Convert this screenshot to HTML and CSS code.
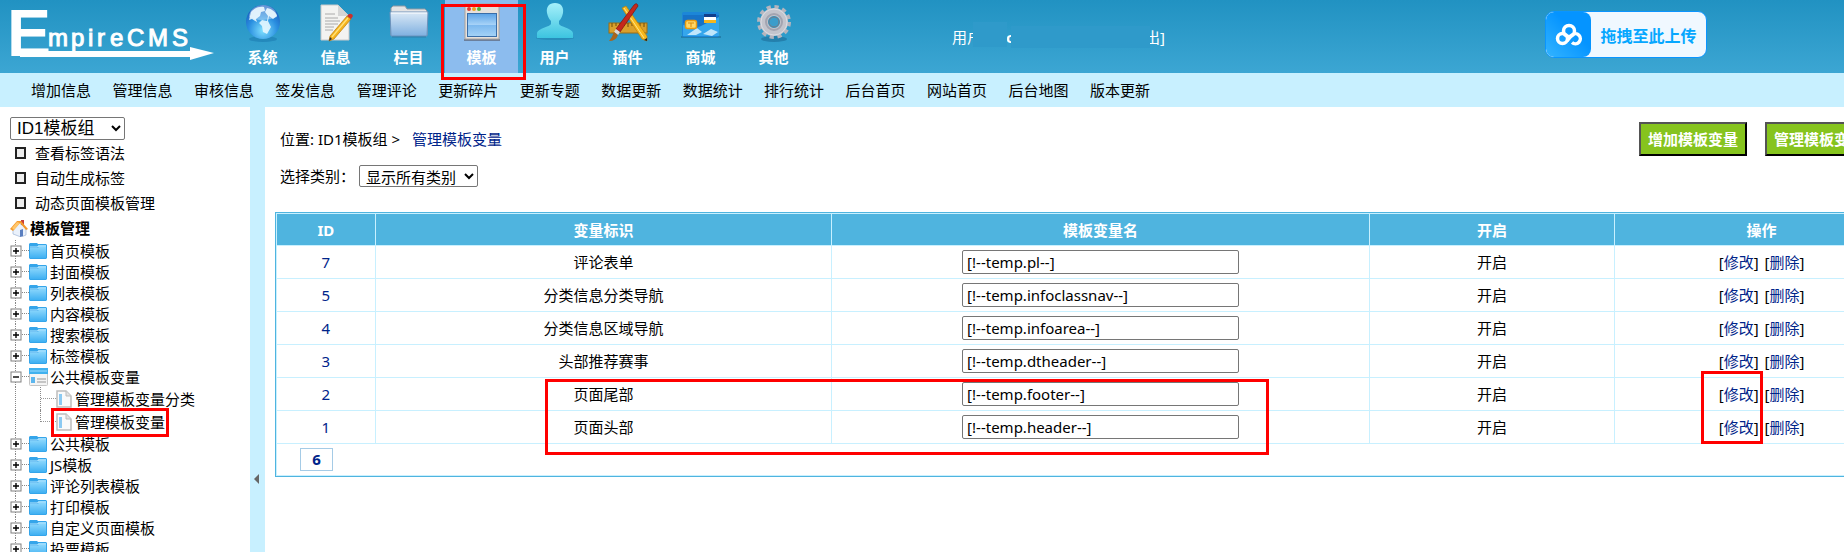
FILE: index.html
```html
<!DOCTYPE html>
<html lang="zh-CN">
<head>
    <meta charset="UTF-8">
    <meta name="viewport" content="width=device-width, initial-scale=1.0">
    <title>EmpireCMS</title>
    <link rel="stylesheet" href="styles.css">
</head>
<body>
<!-- shared icons -->
<svg class="defs" width="0" height="0" aria-hidden="true">
    <defs>
        <linearGradient id="gFolder" x1="0" y1="0" x2="0" y2="1">
            <stop offset="0" stop-color="#8ad6fc"/><stop offset="1" stop-color="#3fb0f2"/>
        </linearGradient>
        <symbol id="plus" viewBox="0 0 12 12">
            <rect x="1" y="1" width="10" height="10" fill="#fff" stroke="#808080"/>
            <path d="M3 6h6M6 3v6" stroke="#000" stroke-width="1.4"/>
        </symbol>
        <symbol id="minus" viewBox="0 0 12 12">
            <rect x="1" y="1" width="10" height="10" fill="#fff" stroke="#808080"/>
            <path d="M3 6h6" stroke="#000" stroke-width="1.4"/>
        </symbol>
        <symbol id="folder" viewBox="0 0 18 16">
            <path d="M0 1l1-1h7l1 1h8l1 1v13l-1 1H1l-1-1z" fill="#35a5ea"/>
            <path d="M9 2h8v2H9z" fill="#7fd0fa"/>
            <path d="M1 5h7l2-1h7v11H1z" fill="url(#gFolder)"/>
            <path d="M1 4h7l2-1h7" fill="none" stroke="#b8e6ff"/>
        </symbol>
        <symbol id="panel" viewBox="0 0 19 18">
            <rect x="0.5" y="0.5" width="18" height="17" rx="1" fill="#f4f4f4" stroke="#c4c4c4"/>
            <path d="M0 0h19v6H0z" fill="#41b1ee"/>
            <path d="M1 3h17" stroke="#9bdcff"/>
            <path d="M2 9h4v6H2z" fill="#5cb6ee"/>
            <path d="M8 11h9M8 14h9" stroke="#b5b5b5" stroke-width="1.4"/>
        </symbol>
        <symbol id="page" viewBox="0 0 16 18">
            <path d="M1 1h9l5 5v11H1z" fill="#fafafa" stroke="#bdbdbd" stroke-width="1.5"/>
            <path d="M10 1v5h5" fill="#e2e2e2" stroke="#bdbdbd"/>
            <path d="M3 4h3v11H3z" fill="#8ccaf2"/>
        </symbol>
    </defs>
</svg>

<header class="top">
    <svg class="logo" width="226" height="73" viewBox="0 0 226 73" role="img" aria-label="EmpireCMS">
        <text class="logo-e" x="7" y="56">E</text>
        <text class="logo-t" x="48 71 88 97 110 127 148 172" y="46">mpireCMS</text>
        <path d="M20 51h170v-4l24 6-24 7v-3H20z" fill="#fff"/>
    </svg>

    <nav class="menu">
        <a href="#" class="menu-item">
            <svg width="40" height="40" viewBox="0 0 40 40">
                <defs>
                    <radialGradient id="gGlobe" cx=".5" cy=".75" r=".7">
                        <stop offset="0" stop-color="#7fe0ff"/><stop offset=".6" stop-color="#2a8fe0"/><stop offset="1" stop-color="#1a5fc0"/>
                    </radialGradient>
                </defs>
                <ellipse cx="20" cy="36" rx="14" ry="3" fill="#1c7bb0" opacity=".6"/>
                <circle cx="20" cy="19" r="17" fill="url(#gGlobe)"/>
                <path d="M8 9c4-5 10-6 13-5l1 4-4 1-1 4-4 3 1 3-5-3-3 1zM24 5c5 1 9 4 10 8l-4 3-4-3-1 5 3 6-4 7-4-2-1-6-3-3 3-3 5 1 1-5-3-4z" fill="#e6f7ff" opacity=".9"/>
                <path d="M6 14a14 12 0 0 1 28 0q-14 6-28 0" fill="#fff" opacity=".35"/>
            </svg>
            <span>系统</span>
        </a>
        <a href="#" class="menu-item">
            <svg width="40" height="40" viewBox="0 0 40 40">
                <path d="M5 2h17l11 11v24H5z" fill="#f3f3f1" stroke="#c9c9c9"/>
                <path d="M22 2v11h11z" fill="#d5d5d5"/>
                <path d="M9 11h10M9 15h13M9 18h15M9 21h13M9 24h9M9 27h8" stroke="#aaa"/>
                <path d="M31 13l4 3-17 20-5 2 1-5z" fill="#f6b31c" stroke="#b97a08" stroke-width=".7"/>
                <path d="M32 15L16 34" stroke="#ffe27a" stroke-width="1.4"/>
                <path d="M31 13l2-2q3-1 4 2l-2 3z" fill="#c9302c"/>
                <path d="M14 34l2 2-3 2z" fill="#333"/>
            </svg>
            <span>信息</span>
        </a>
        <a href="#" class="menu-item">
            <svg width="40" height="40" viewBox="0 0 40 40">
                <defs>
                    <linearGradient id="gDir" x1="0" y1="0" x2="0" y2="1">
                        <stop offset="0" stop-color="#dbe9f6"/><stop offset="1" stop-color="#7fb0e0"/>
                    </linearGradient>
                </defs>
                <path d="M2 5l2-2h12l2 3h18l2 2v24H2z" fill="#e4e4e4" stroke="#8f9aa5"/>
                <path d="M1 9h38l-1 24H2z" fill="url(#gDir)" stroke="#6c93bd"/>
                <path d="M2 10h36" stroke="#fff"/>
                <path d="M3 34h34" stroke="#33648c" opacity=".5"/>
            </svg>
            <span>栏目</span>
        </a>
        <a href="#" class="menu-item active">
            <svg width="40" height="40" viewBox="0 0 40 40">
                <defs>
                    <linearGradient id="gWin" x1="0" y1="0" x2="0" y2="1">
                        <stop offset="0" stop-color="#5aa2e6"/><stop offset=".5" stop-color="#a9d4f8"/><stop offset=".52" stop-color="#7db9ef"/><stop offset="1" stop-color="#a5d3f7"/>
                    </linearGradient>
                </defs>
                <path d="M2 37h36" stroke="#6b7f9c" stroke-width="2"/>
                <rect x="3" y="1" width="34" height="35" fill="#e6e1dc" stroke="#a9a29c"/>
                <rect x="5.500" y="10.500" width="29" height="23" fill="url(#gWin)" stroke="#3a6ea8"/>
                <circle cx="7" cy="6" r="2" fill="#e03c31"/><circle cx="12" cy="6" r="2" fill="#f0a01e"/><circle cx="17" cy="6" r="2" fill="#4fae3a"/>
            </svg>
            <span>模板</span>
            <i class="mark mark-menu"></i>
        </a>
        <a href="#" class="menu-item">
            <svg width="40" height="40" viewBox="0 0 40 40">
                <defs>
                    <linearGradient id="gUser" x1="0" y1="0" x2="0" y2="1">
                        <stop offset="0" stop-color="#a5f0fa"/><stop offset="1" stop-color="#3cc4e0"/>
                    </linearGradient>
                </defs>
                <ellipse cx="20" cy="35" rx="19" ry="2" fill="#1d7dac" opacity=".5"/>
                <path d="M20 0c6 0 9 4 8 10-1 4-2 6-4 8v3c1 3 13 4 14 9v5H2v-5c1-5 13-6 14-9v-3c-2-2-3-4-4-8-1-6 2-10 8-10z" fill="url(#gUser)"/>
            </svg>
            <span>用户</span>
        </a>
        <a href="#" class="menu-item">
            <svg width="40" height="40" viewBox="0 0 40 40">
                <rect x="1" y="20" width="38" height="10" fill="#d9a02c" stroke="#9b6c12"/>
                <path d="M4 20v4M8 20v3M12 20v4M16 20v3M20 20v4M24 20v3M28 20v4M32 20v3M36 20v4" stroke="#6f4c0a"/>
                <path d="M14 5l4-2 21 30v5l-5-2z" fill="#f7b71d" stroke="#b87c0a" stroke-width=".7"/>
                <path d="M16 5l20 30" stroke="#ffe58a"/>
                <path d="M36 37l3 1v-3z" fill="#222"/>
                <path d="M26 2q3-3 4 1L12 29l-4-3z" fill="#c5281c" stroke="#7e140d" stroke-width=".7"/>
                <path d="M8 26l4 3-2 3-4-3z" fill="#d8d8d8"/>
                <path d="M6 29l4 3q-2 6-9 6 3-3 5-9z" fill="#a8651d"/>
            </svg>
            <span>插件</span>
        </a>
        <a href="#" class="menu-item">
            <svg width="40" height="40" viewBox="0 0 40 40">
                <path d="M0 34h40" stroke="#1c6c96" stroke-width="2" opacity=".6"/>
                <rect x="1" y="9" width="37" height="25" rx="2" fill="#1c86d8"/>
                <path d="M2 12h36v9L14 24 2 20z" fill="#1673c8"/>
                <path d="M2 33V22l14 3L38 14v19z" fill="#35a6ec"/>
                <path d="M6 32l10-7 5 4-6 3zM22 31l8-5 7 3-6 4z" fill="#bfe6fb"/>
                <path d="M23 11h12v3H23z" fill="#123f8c"/><path d="M23 14h12v3H23z" fill="#fff"/><path d="M23 17h12v3H23z" fill="#f5b61f"/>
                <rect x="4.500" y="17.500" width="11" height="8" rx="2" fill="#ffd867" stroke="#e79a10" stroke-width="1.500"/>
                <path d="M7 20h6M10 20v4" stroke="#d98a0a"/>
            </svg>
            <span>商城</span>
        </a>
        <a href="#" class="menu-item">
            <svg width="40" height="40" viewBox="0 0 40 40">
                <ellipse cx="20" cy="36" rx="13" ry="3" fill="#1d6d97" opacity=".6"/>
                <circle cx="20" cy="19" r="15" fill="none" stroke="#b4b5be" stroke-width="4" stroke-dasharray="4.200 3.654"/>
                <circle cx="20" cy="19" r="10" fill="none" stroke="#c3c4cc" stroke-width="8"/>
                <circle cx="20" cy="19" r="13" fill="none" stroke="#dcdce2"/>
                <circle cx="20" cy="19" r="8" fill="none" stroke="#a3a4b0" stroke-width="2"/>
                <circle cx="20" cy="19" r="5" fill="#3b9dcb" stroke="#777985"/>
            </svg>
            <span>其他</span>
        </a>
    </nav>

    <div class="user">
        <span>用户</span><b>c</b><span>出]</span>
        <i class="patch patch-a"></i>
        <i class="patch patch-b"></i>
    </div>
</header>

<button type="button" class="upload">
    <span class="upload-icon">
        <svg width="28" height="24" viewBox="0 0 28 24" fill="none" stroke="#fff" stroke-width="3.500">
            <circle cx="14" cy="8" r="5.500"/>
            <circle cx="7.500" cy="15.500" r="5"/>
            <path d="M17 19.500a5 5 0 1 0 0-7.500l-5 6"/>
        </svg>
    </span>
    <span class="upload-text">拖拽至此上传</span>
</button>

<nav class="subnav">
    <a href="#">增加信息</a>
    <a href="#">管理信息</a>
    <a href="#">审核信息</a>
    <a href="#">签发信息</a>
    <a href="#">管理评论</a>
    <a href="#">更新碎片</a>
    <a href="#">更新专题</a>
    <a href="#">数据更新</a>
    <a href="#">数据统计</a>
    <a href="#">排行统计</a>
    <a href="#">后台首页</a>
    <a href="#">网站首页</a>
    <a href="#">后台地图</a>
    <a href="#">版本更新</a>
</nav>

<div class="frame">
    <aside class="side">
        <select class="group-select" aria-label="模板组">
            <option>ID1模板组</option>
        </select>
        <ul class="links">
            <li><a href="#">查看标签语法</a></li>
            <li><a href="#">自动生成标签</a></li>
            <li><a href="#">动态页面模板管理</a></li>
        </ul>
        <div class="tree-title">
            <svg width="18" height="18" viewBox="0 0 18 18">
                <path d="M3 9l6-5 7 5v7l-5 2-8-3z" fill="#eaf1fb" stroke="#9fb4d6" stroke-width=".7"/>
                <path d="M11 1h3v5h-3z" fill="#c9403a"/>
                <path d="M0 10L7 2l4 0 7 8-2 1-6-7-7 8z" fill="#f59a2c"/>
                <path d="M2 9l5-6 3 1-6 7z" fill="#ffc66b"/>
                <path d="M10 11l3-1v7l-3 1z" fill="#5a7fc0"/>
            </svg>
            <span>模板管理</span>
        </div>
        <ul class="tree">
            <li><svg class="sign"><use href="#plus"/></svg><i class="dots"></i><svg class="ico"><use href="#folder"/></svg><a href="#">首页模板</a></li>
            <li><svg class="sign"><use href="#plus"/></svg><i class="dots"></i><svg class="ico"><use href="#folder"/></svg><a href="#">封面模板</a></li>
            <li><svg class="sign"><use href="#plus"/></svg><i class="dots"></i><svg class="ico"><use href="#folder"/></svg><a href="#">列表模板</a></li>
            <li><svg class="sign"><use href="#plus"/></svg><i class="dots"></i><svg class="ico"><use href="#folder"/></svg><a href="#">内容模板</a></li>
            <li><svg class="sign"><use href="#plus"/></svg><i class="dots"></i><svg class="ico"><use href="#folder"/></svg><a href="#">搜索模板</a></li>
            <li><svg class="sign"><use href="#plus"/></svg><i class="dots"></i><svg class="ico"><use href="#folder"/></svg><a href="#">标签模板</a></li>
            <li><svg class="sign"><use href="#minus"/></svg><i class="dots"></i><svg class="ico ico-open"><use href="#panel"/></svg><a href="#">公共模板变量</a></li>
            <li class="child"><i class="elbow"></i><svg class="ico-page"><use href="#page"/></svg><a href="#">管理模板变量分类</a></li>
            <li class="child last"><i class="elbow"></i><svg class="ico-page"><use href="#page"/></svg><a href="#">管理模板变量</a><i class="mark mark-tree"></i></li>
            <li><svg class="sign"><use href="#plus"/></svg><i class="dots"></i><svg class="ico"><use href="#folder"/></svg><a href="#">公共模板</a></li>
            <li><svg class="sign"><use href="#plus"/></svg><i class="dots"></i><svg class="ico"><use href="#folder"/></svg><a href="#">JS模板</a></li>
            <li><svg class="sign"><use href="#plus"/></svg><i class="dots"></i><svg class="ico"><use href="#folder"/></svg><a href="#">评论列表模板</a></li>
            <li><svg class="sign"><use href="#plus"/></svg><i class="dots"></i><svg class="ico"><use href="#folder"/></svg><a href="#">打印模板</a></li>
            <li><svg class="sign"><use href="#plus"/></svg><i class="dots"></i><svg class="ico"><use href="#folder"/></svg><a href="#">自定义页面模板</a></li>
            <li><svg class="sign"><use href="#plus"/></svg><i class="dots"></i><svg class="ico"><use href="#folder"/></svg><a href="#">投票模板</a></li>
        </ul>
    </aside>

    <div class="divider"><i class="arrow"></i></div>

    <main class="main">
        <div class="head">
            <div class="path">位置: ID1模板组 &gt; <a href="#">管理模板变量</a></div>
            <div class="buttons">
                <button type="button">增加模板变量</button>
                <button type="button">管理模板变量分类</button>
            </div>
        </div>
        <div class="filter">
            <label for="classid">选择类别：</label>
            <select id="classid">
                <option>显示所有类别</option>
            </select>
        </div>

        <div class="list-wrap">
            <table class="list">
                <thead>
                <tr>
                    <th class="c-id">ID</th>
                    <th class="c-name">变量标识</th>
                    <th class="c-var">模板变量名</th>
                    <th class="c-open">开启</th>
                    <th class="c-do">操作</th>
                </tr>
                </thead>
                <tbody>
                <tr>
                    <td><a href="#">7</a></td>
                    <td>评论表单</td>
                    <td><input type="text" aria-label="评论表单" value="[!--temp.pl--]"></td>
                    <td>开启</td>
                    <td>[<a href="#">修改</a>] <span class="act">[<a href="#">删除</a>]</span></td>
                </tr>
                <tr>
                    <td><a href="#">5</a></td>
                    <td>分类信息分类导航</td>
                    <td><input type="text" aria-label="分类信息分类导航" value="[!--temp.infoclassnav--]"></td>
                    <td>开启</td>
                    <td>[<a href="#">修改</a>] <span class="act">[<a href="#">删除</a>]</span></td>
                </tr>
                <tr>
                    <td><a href="#">4</a></td>
                    <td>分类信息区域导航</td>
                    <td><input type="text" aria-label="分类信息区域导航" value="[!--temp.infoarea--]"></td>
                    <td>开启</td>
                    <td>[<a href="#">修改</a>] <span class="act">[<a href="#">删除</a>]</span></td>
                </tr>
                <tr>
                    <td><a href="#">3</a></td>
                    <td>头部推荐赛事</td>
                    <td><input type="text" aria-label="头部推荐赛事" value="[!--temp.dtheader--]"></td>
                    <td>开启</td>
                    <td>[<a href="#">修改</a>] <span class="act">[<a href="#">删除</a>]</span></td>
                </tr>
                <tr>
                    <td><a href="#">2</a></td>
                    <td>页面尾部</td>
                    <td><input type="text" aria-label="页面尾部" value="[!--temp.footer--]"></td>
                    <td>开启</td>
                    <td>[<a href="#">修改</a>] <span class="act">[<a href="#">删除</a>]</span></td>
                </tr>
                <tr>
                    <td><a href="#">1</a></td>
                    <td>页面头部</td>
                    <td><input type="text" aria-label="页面头部" value="[!--temp.header--]"></td>
                    <td>开启</td>
                    <td>[<a href="#">修改</a>] <span class="act">[<a href="#">删除</a>]</span></td>
                </tr>
                <tr>
                    <td colspan="5" class="pages"><a href="#">6</a></td>
                </tr>
                </tbody>
            </table>
            <i class="mark mark-rows"></i>
            <i class="mark mark-edit"></i>
        </div>
    </main>
</div>
</body>
</html>
```
FILE: styles.css
```css
*,
*::before {
    box-sizing: border-box;
}

body {
    margin: 0;
    overflow: hidden;
    background: #fff;
    color: #000;
    font-family: "Noto Sans", "Noto Sans CJK SC", sans-serif;
    font-size: 15px;
    line-height: 20px;
}

a {
    color: inherit;
    text-decoration: none;
}

ul {
    list-style: none;
    margin: 0;
    padding: 0;
}

.defs {
    position: absolute;
}

/* red highlight boxes */
.mark {
    position: absolute;
    border: 3px solid #f00;
    pointer-events: none;
    z-index: 2;
}

/* top bar */
.top {
    display: flex;
    height: 73px;
    background: linear-gradient(#2192c2, #3ca6d3);
    color: #fff;
}

.logo {
    flex: none;
    overflow: visible;
    fill: #fff;
}

.logo-e {
    font: bold 66px "Liberation Sans", sans-serif;
}

.logo-t {
    font: 24px "Liberation Sans", sans-serif;
    stroke: #fff;
}

.menu {
    display: flex;
}

.menu-item {
    position: relative;
    display: flex;
    flex-direction: column;
    align-items: center;
    gap: 4px;
    width: 73px;
    padding-top: 3px;
    font-weight: bold;
}

.menu-item.active {
    background: #8cbcee;
}

.mark-menu {
    top: 4px;
    left: -4px;
    width: 85px;
    height: 76px;
}

.user {
    position: relative;
    display: flex;
    align-items: center;
    width: 213px;
    margin-left: 142px;
}

.user b {
    margin-left: 24px;
}

.user b + span {
    margin-left: auto;
}

.patch {
    position: absolute;
    background: #2f9aca;
}

.patch-a {
    top: 22px;
    left: 21px;
    width: 34px;
    height: 25px;
}

.patch-b {
    top: 26px;
    left: 59px;
    width: 139px;
    height: 22px;
}

/* floating upload widget */
.upload {
    position: absolute;
    top: 11px;
    right: 137px;
    display: flex;
    align-items: center;
    width: 162px;
    height: 47px;
    padding: 0;
    border: 1px solid #0a95ff;
    border-radius: 9px;
    background: #f0f8ff;
    color: #06a7ff;
    font: bold 16px "Noto Sans CJK SC", sans-serif;
    overflow: hidden;
    cursor: pointer;
}

.upload-icon {
    display: flex;
    align-items: center;
    justify-content: center;
    width: 45px;
    height: 45px;
    border-radius: 8px;
    background: linear-gradient(45deg, #33b4ff, #0594ff 60%);
}

.upload-text {
    flex: 1;
    line-height: 20px;
}

/* sub menu */
.subnav {
    display: flex;
    justify-content: space-between;
    align-items: center;
    width: 1181px;
    height: 34px;
    padding: 0 31px;
    box-shadow: 0 0 0 100vmax #c8f0ff;
    clip-path: inset(0 -100vmax 0 0);
    background: #c8f0ff;
}

.frame {
    display: flex;
    min-height: calc(100vh - 107px);
}

/* left tree */
.side {
    flex: none;
    width: 250px;
    padding: 10px 0 0 10px;
}

select {
    border: 1px solid #767676;
    border-radius: 2px;
    background: #fff;
    color: #000;
    padding: 0 2px;
}

.group-select {
    display: block;
    width: 115px;
    height: 23px;
    font: 17px/20px "Liberation Sans", "Noto Sans CJK SC", sans-serif;
}

.links li {
    display: flex;
    align-items: center;
    gap: 9px;
    height: 25px;
    padding-left: 5px;
}

.links li::before {
    content: "";
    width: 11px;
    height: 12px;
    border: 2px solid #222;
    background: linear-gradient(#eee 45%, #bbb 45%, #bbb 55%, #eee 55%);
}

.tree-title {
    display: flex;
    align-items: center;
    gap: 2px;
    height: 25px;
    font-weight: bold;
}

.tree li {
    position: relative;
    display: flex;
    align-items: center;
    height: 21px;
}

/* vertical dotted trunk */
.tree li::before {
    content: "";
    position: absolute;
    top: 0;
    bottom: 0;
    left: 5px;
    border-left: 1px dotted #888;
}

.tree .child {
    height: 23px;
    padding-left: 30px;
}

.sign {
    position: relative;
    flex: none;
    width: 12px;
    height: 12px;
}

.dots {
    width: 7px;
    border-top: 1px dotted #888;
}

.ico {
    width: 18px;
    height: 16px;
    margin-right: 3px;
}

.ico-open {
    width: 19px;
    height: 18px;
    margin-right: 2px;
}

.ico-page {
    width: 16px;
    height: 18px;
    margin-right: 3px;
}

.elbow {
    align-self: stretch;
    width: 16px;
    background: linear-gradient(90deg, #999 50%, transparent 50%) 0 11px / 2px 1px repeat-x;
    border-left: 1px dotted #888;
}

.last .elbow {
    height: 12px;
}

.mark-tree {
    top: -2px;
    left: 41px;
    width: 118px;
    height: 29px;
}

.divider {
    flex: none;
    width: 15px;
    padding: 367px 0 0 4px;
    background: #c8f0ff;
}

.arrow {
    display: block;
    width: 0;
    border: 5px solid transparent;
    border-left-width: 0;
    border-right-color: #666;
}

/* content */
.main {
    flex: none;
    min-width: 1655px;
    width: calc(100% - 189px);
    padding: 15px 10px;
}

.head {
    display: flex;
    justify-content: space-between;
    align-items: center;
    padding: 0 7px 0 5px;
}

.path a {
    margin-left: 8px;
}

.path a,
.list a {
    color: #00248a;
}

.buttons {
    display: flex;
    gap: 18px;
}

.buttons button {
    height: 34px;
    padding: 0 7px;
    border: 2px outset #000;
    background: #86c41e;
    color: #fff;
    font: bold 15px/20px "Noto Sans CJK SC", sans-serif;
}

.filter {
    display: flex;
    align-items: center;
    gap: 4px;
    padding: 9px 0 25px 5px;
}

.filter select {
    width: 119px;
    height: 22px;
    font: 15px/20px "Noto Sans", "Noto Sans CJK SC", sans-serif;
}

.list-wrap {
    position: relative;
}

.list {
    width: 100%;
    table-layout: fixed;
    border: 1px solid #4fb4df;
    border-collapse: separate;
    border-spacing: 1px;
    background: #c8f0ff;
    text-align: center;
}

.list th {
    height: 31px;
    padding: 0;
    background: #4fb4df;
    color: #fff;
}

.list td {
    height: 32px;
    padding: 0;
    background: #fff;
}

.c-id { width: 6%; }
.c-name { width: 28%; }
.c-var { width: 33%; }
.c-open { width: 15%; }
.c-do { width: 18%; }

.act {
    margin-left: 2px;
}

.list input {
    display: block;
    width: 277px;
    height: 24px;
    margin: 0 auto;
    padding: 0 4px;
    border: 1px solid #767676;
    border-radius: 2px;
    font: 15px "Noto Sans", sans-serif;
    color: #000;
}

.list .pages {
    height: 31px;
    padding-left: 23px;
    text-align: left;
}

.pages a {
    display: block;
    width: 33px;
    height: 23px;
    border: 1px solid #a5cbe6;
    font-weight: bold;
    text-align: center;
}

.mark-rows {
    top: 167px;
    left: 270px;
    width: 724px;
    height: 76px;
}

.mark-edit {
    top: 159px;
    left: 1426px;
    width: 62px;
    height: 73px;
}
```
